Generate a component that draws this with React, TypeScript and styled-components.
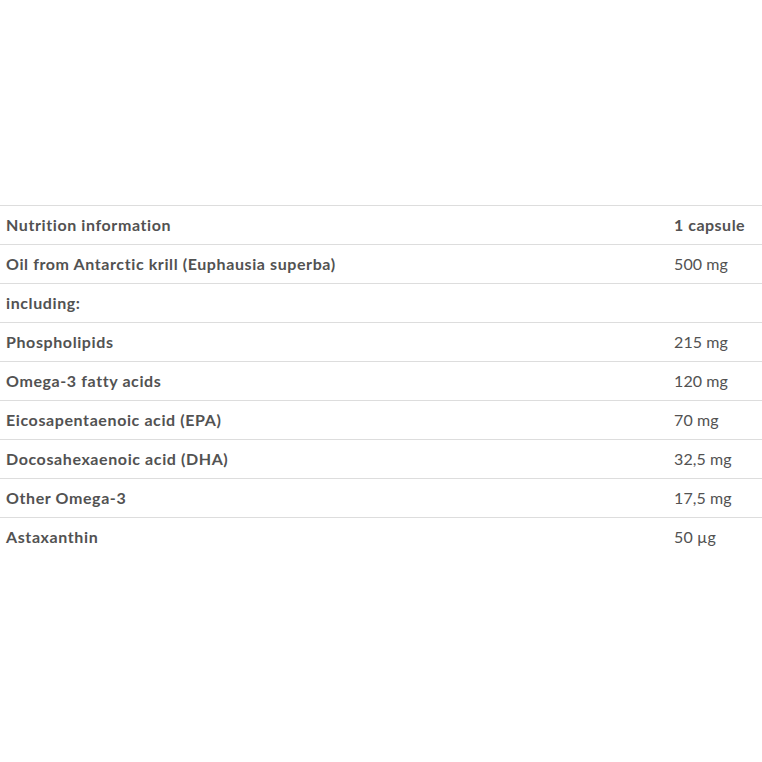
import React from 'react';
import styled, { createGlobalStyle } from 'styled-components';

const GlobalStyle = createGlobalStyle`
  html, body {
    margin: 0;
    padding: 0;
    background: #ffffff;
  }
  body {
    font-family: Lato, "Open Sans", sans-serif;
  }
`;

const Page = styled.div`
  min-height: 762px;
  display: flex;
  flex-direction: column;
  justify-content: center;
`;

const Table = styled.table`
  width: 100%;
  border-collapse: collapse;
  border-top: 1px solid #dddddd;
  font-size: 16px;
  color: #525252;
`;

const Row = styled.tr<{ last?: boolean }>`
  height: 39px;
  border-bottom: ${props => props.last ? 'none' : '1px solid #dddddd'};
`;

const NameCell = styled.td`
  padding: 0 6px 2px;
  font-weight: 700;
  letter-spacing: 0.6px;
  text-align: left;
  vertical-align: middle;
`;

const ValueCell = styled.td<{ bold?: boolean }>`
  width: 82px;
  padding: 0 6px 2px;
  font-weight: ${props => props.bold ? 700 : 400};
  letter-spacing: ${props => props.bold ? '0.5px' : '0.1px'};
  text-align: left;
  vertical-align: middle;
`;

const rows: [string, string][] = [
  ['Oil from Antarctic krill (Euphausia superba)', '500 mg'],
  ['including:', ''],
  ['Phospholipids', '215 mg'],
  ['Omega-3 fatty acids', '120 mg'],
  ['Eicosapentaenoic acid (EPA)', '70 mg'],
  ['Docosahexaenoic acid (DHA)', '32,5 mg'],
  ['Other Omega-3', '17,5 mg'],
  ['Astaxanthin', '50 µg'],
];

const App: React.FC = () => {
  return (
    <>
      <GlobalStyle />
      <Page>
        <Table>
          <tbody>
            <Row>
              <NameCell>Nutrition information</NameCell>
              <ValueCell bold>1 capsule</ValueCell>
            </Row>
            {rows.map(([name, value], i) => (
              <Row key={name} last={i === rows.length - 1}>
                <NameCell>{name}</NameCell>
                <ValueCell>{value}</ValueCell>
              </Row>
            ))}
          </tbody>
        </Table>
      </Page>
    </>
  );
};

export default App;
